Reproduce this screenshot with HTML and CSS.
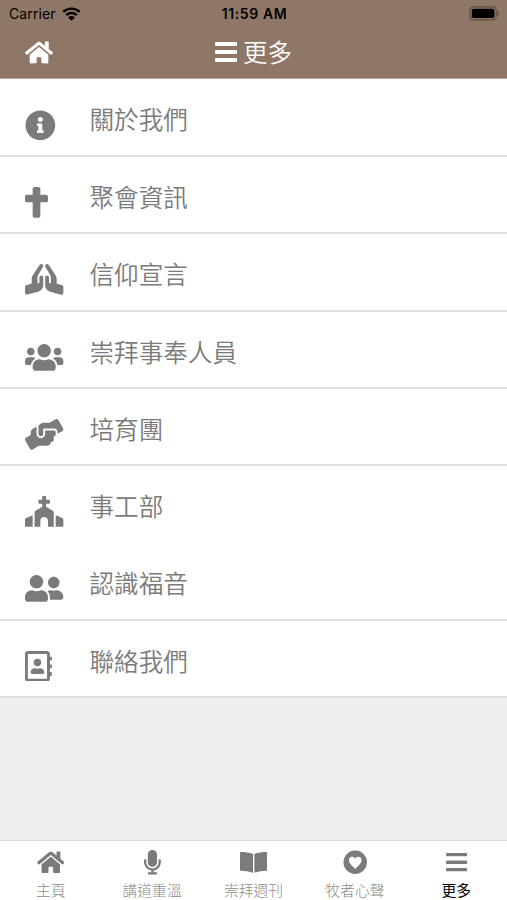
FILE: index.html
```html
<!DOCTYPE html>
<html lang="zh-Hant">
<head>
  <meta charset="UTF-8">
  <meta name="viewport" content="width=device-width, initial-scale=1.0">
  <title>更多</title>
  <link rel="stylesheet" href="styles.css">
</head>
<body>
  <header class="header">
    <div class="status-bar">
      <div class="carrier">
        <span>Carrier</span>
        <svg class="wifi" viewBox="0 0 18 13">
          <path d="M1.2 4.6a11.2 11.2 0 0 1 15.6 0M4 7.6a7.2 7.2 0 0 1 10 0" fill="none" stroke="#000" stroke-width="2.3"/>
          <path d="M9 13L5.8 9.8a4.6 4.6 0 0 1 6.4 0z"/>
        </svg>
      </div>
      <span class="time">11:59 AM</span>
      <svg class="battery" viewBox="0 0 31 15">
        <rect x=".9" y=".9" width="26.4" height="13" rx="3.8" fill="none" stroke="#5d4c42" stroke-width="1.2"/>
        <rect x="2.8" y="2.8" width="22.6" height="9.2" rx="1.8"/>
        <path d="M28.7 5v4.8c2-.9 2-3.9 0-4.8z" fill="#5d4c42"/>
      </svg>
    </div>
    <div class="nav-bar">
      <a class="home-link" href="#">
        <svg class="icon-home" viewBox="0 0 576 512"><path d="M280.37 148.26L96 300.11V464a16 16 0 0 0 16 16l112.06-.29a16 16 0 0 0 15.92-16V368a16 16 0 0 1 16-16h64a16 16 0 0 1 16 16v95.64a16 16 0 0 0 16 16.05L464 480a16 16 0 0 0 16-16V300L295.67 148.26a12.19 12.19 0 0 0-15.3 0zM571.6 251.47L488 182.56V44.05a12 12 0 0 0-12-12h-56a12 12 0 0 0-12 12v72.61L318.47 43a48 48 0 0 0-61 0L4.34 251.47a12 12 0 0 0-1.6 16.9l25.5 31A12 12 0 0 0 45.15 301l235.22-193.74a12.19 12.19 0 0 1 15.3 0L530.9 301a12 12 0 0 0 16.9-1.6l25.5-31a12 12 0 0 0-1.7-16.93z"/></svg>
      </a>
      <h1 class="title">
        <svg class="icon-bars" viewBox="0 0 22 20"><rect width="22" height="4" rx="1"/><rect y="8" width="22" height="4" rx="1"/><rect y="16" width="22" height="4" rx="1"/></svg>
        <span>更多</span>
      </h1>
    </div>
  </header>

  <main class="menu">
    <a class="menu-item" href="#">
      <svg viewBox="0 0 512 512"><path d="M256 8C119.043 8 8 119.083 8 256c0 136.997 111.043 248 248 248s248-111.003 248-248C504 119.083 392.957 8 256 8zm0 110c23.196 0 42 18.804 42 42s-18.804 42-42 42-42-18.804-42-42 18.804-42 42-42zm56 254c0 6.627-5.373 12-12 12h-88c-6.627 0-12-5.373-12-12v-24c0-6.627 5.373-12 12-12h12v-64h-12c-6.627 0-12-5.373-12-12v-24c0-6.627 5.373-12 12-12h64c6.627 0 12 5.373 12 12v100h12c6.627 0 12 5.373 12 12v24z"/></svg>
      <span>關於我們</span>
    </a>
    <a class="menu-item" href="#">
      <svg viewBox="0 0 384 512"><path d="M352 128h-96V32c0-17.67-14.33-32-32-32h-64c-17.67 0-32 14.33-32 32v96H32c-17.67 0-32 14.33-32 32v64c0 17.67 14.33 32 32 32h96v224c0 17.67 14.33 32 32 32h64c17.67 0 32-14.33 32-32V256h96c17.67 0 32-14.33 32-32v-64c0-17.67-14.33-32-32-32z"/></svg>
      <span>聚會資訊</span>
    </a>
    <a class="menu-item" href="#">
      <svg viewBox="0 0 640 512"><path d="M272 191.91c-17.6 0-32 14.4-32 32v80c0 8.84-7.16 16-16 16s-16-7.16-16-16v-76.55c0-17.39 4.72-34.47 13.69-49.39l77.75-129.59c9.09-15.16 4.19-34.81-10.97-43.91-14.45-8.67-32.72-4.3-42.3 9.21-.2.23-.62.21-.79.48l-117.26 175.9C117.56 205.9 112 224.31 112 243.29v80.23l-90.12 30.04A31.974 31.974 0 0 0 0 383.91v96c0 10.82 8.52 32 32 32 2.69 0 5.41-.34 8.06-1.03l179.19-46.62C269.16 449.99 304 403.8 304 351.91v-128c0-17.6-14.4-32-32-32zm346.12 161.73L528 323.6v-80.23c0-18.98-5.56-37.39-16.12-53.23L394.62 14.25c-.18-.27-.59-.24-.79-.48-9.58-13.51-27.85-17.88-42.3-9.21-15.16 9.09-20.06 28.75-10.97 43.91l77.75 129.59c8.97 14.92 13.69 32 13.69 49.39V304c0 8.84-7.16 16-16 16s-16-7.16-16-16v-80c0-17.6-14.4-32-32-32s-32 14.4-32 32v128c0 51.89 34.84 98.08 84.75 112.34l179.19 46.62c2.66.69 5.38 1.03 8.06 1.03 23.48 0 32-21.18 32-32v-96c0-13.77-8.81-25.99-21.88-30.35z"/></svg>
      <span>信仰宣言</span>
    </a>
    <a class="menu-item" href="#">
      <svg viewBox="0 0 640 512"><path d="M96 224c35.3 0 64-28.7 64-64s-28.7-64-64-64-64 28.7-64 64 28.7 64 64 64zm448 0c35.3 0 64-28.7 64-64s-28.7-64-64-64-64 28.7-64 64 28.7 64 64 64zm32 32h-64c-17.6 0-33.5 7.1-45.1 18.6 40.3 22.1 68.9 62 75.1 109.4h66c17.7 0 32-14.3 32-32v-32c0-35.3-28.7-64-64-64zm-256 0c61.9 0 112-50.1 112-112S381.9 32 320 32 208 82.1 208 144s50.1 112 112 112zm76.8 32h-8.3c-20.8 10-43.9 16-68.5 16s-47.6-6-68.5-16h-8.3C179.6 288 128 339.6 128 403.2V432c0 26.5 21.5 48 48 48h288c26.5 0 48-21.5 48-48v-28.8c0-63.6-51.6-115.2-115.2-115.2zm-223.7-13.4C161.5 263.1 145.6 256 128 256H64c-35.3 0-64 28.7-64 64v32c0 17.7 14.3 32 32 32h65.9c6.3-47.4 34.9-87.3 75.2-109.4z"/></svg>
      <span>崇拜事奉人員</span>
    </a>
    <a class="menu-item" href="#">
      <svg viewBox="0 0 640 512"><path d="M488 192H336v56c0 39.7-32.3 72-72 72s-72-32.3-72-72V126.4l-64.9 39C107.8 176.9 96 197.8 96 220.2v47.3l-80 46.2C.7 322.5-4.6 342.1 4.3 357.4l80 138.6c8.8 15.3 28.4 20.5 43.7 11.7L231.4 448H368c35.3 0 64-28.7 64-64h16c17.7 0 32-14.3 32-32v-64h8c13.3 0 24-10.7 24-24v-48c0-13.3-10.7-24-24-24zm147.7-37.4L555.7 16C546.9.7 527.3-4.5 512 4.3L408.6 64H306.4c-12 0-23.7 3.4-33.9 9.7L239 94.6c-9.4 5.8-15 16.1-15 27.1V248c0 22.1 17.9 40 40 40s40-17.9 40-40v-88h184c30.9 0 56 25.1 56 56v28.5l80-46.2c15.3-8.9 20.5-28.4 11.7-43.7z"/></svg>
      <span>培育團</span>
    </a>
    <a class="menu-item no-line" href="#">
      <svg viewBox="0 0 640 512"><path d="M464.46 246.68L352 179.2V128h48c8.84 0 16-7.16 16-16V80c0-8.84-7.16-16-16-16h-48V16c0-8.84-7.16-16-16-16h-32c-8.84 0-16 7.16-16 16v48h-48c-8.84 0-16 7.16-16 16v32c0 8.84 7.16 16 16 16h48v51.2l-112.46 67.48A31.997 31.997 0 0 0 160 274.12V512h96v-96c0-35.35 28.65-64 64-64s64 28.65 64 64v96h96V274.12c0-11.24-5.9-21.66-15.54-27.44zM0 395.96V496c0 8.84 7.16 16 16 16h112V320L19.39 366.54A32.024 32.024 0 0 0 0 395.96zm620.61-29.42L512 320v192h112c8.84 0 16-7.16 16-16V395.96c0-12.8-7.63-24.37-19.39-29.42z"/></svg>
      <span>事工部</span>
    </a>
    <a class="menu-item" href="#">
      <svg viewBox="0 0 640 512"><path d="M192 256c61.9 0 112-50.1 112-112S253.9 32 192 32 80 82.1 80 144s50.1 112 112 112zm76.8 32h-8.3c-20.8 10-43.9 16-68.5 16s-47.6-6-68.5-16h-8.3C51.6 288 0 339.6 0 403.2V432c0 26.5 21.5 48 48 48h288c26.5 0 48-21.5 48-48v-28.8c0-63.6-51.6-115.2-115.2-115.2zM480 256c53 0 96-43 96-96s-43-96-96-96-96 43-96 96 43 96 96 96zm48 32h-3.8c-13.9 4.8-28.6 8-44.2 8s-30.3-3.2-44.2-8H432c-20.4 0-39.2 5.9-55.7 15.4 24.4 26.3 39.7 61.2 39.7 99.8v38.4c0 2.2-.5 4.3-.6 6.4H592c26.5 0 48-21.5 48-48 0-61.9-50.1-112-112-112z"/></svg>
      <span>認識福音</span>
    </a>
    <a class="menu-item" href="#">
      <svg viewBox="0 0 448 512"><path d="M436 160c6.6 0 12-5.4 12-12v-40c0-6.6-5.4-12-12-12h-20V48c0-26.5-21.5-48-48-48H48C21.5 0 0 21.5 0 48v416c0 26.5 21.5 48 48 48h320c26.5 0 48-21.5 48-48v-48h20c6.6 0 12-5.4 12-12v-40c0-6.6-5.4-12-12-12h-20v-64h20c6.6 0 12-5.4 12-12v-40c0-6.6-5.4-12-12-12h-20v-64h20zm-68 304H48V48h320v416zM208 256c35.3 0 64-28.7 64-64s-28.7-64-64-64-64 28.7-64 64 28.7 64 64 64zm-89.6 128h179.2c12.4 0 22.4-8.6 22.4-19.2v-19.2c0-31.8-30.1-57.6-67.2-57.6-10.8 0-18.7 8-44.8 8-26.9 0-33.4-8-44.8-8-37.1 0-67.2 25.8-67.2 57.6v19.2c0 10.6 10 19.2 22.4 19.2z"/></svg>
      <span>聯絡我們</span>
    </a>
  </main>

  <nav class="tab-bar">
    <a class="tab" href="#">
      <svg viewBox="0 0 576 512"><path d="M280.37 148.26L96 300.11V464a16 16 0 0 0 16 16l112.06-.29a16 16 0 0 0 15.92-16V368a16 16 0 0 1 16-16h64a16 16 0 0 1 16 16v95.64a16 16 0 0 0 16 16.05L464 480a16 16 0 0 0 16-16V300L295.67 148.26a12.19 12.19 0 0 0-15.3 0zM571.6 251.47L488 182.56V44.05a12 12 0 0 0-12-12h-56a12 12 0 0 0-12 12v72.61L318.47 43a48 48 0 0 0-61 0L4.34 251.47a12 12 0 0 0-1.6 16.9l25.5 31A12 12 0 0 0 45.15 301l235.22-193.74a12.19 12.19 0 0 1 15.3 0L530.9 301a12 12 0 0 0 16.9-1.6l25.5-31a12 12 0 0 0-1.7-16.93z"/></svg>
      <span>主頁</span>
    </a>
    <a class="tab" href="#">
      <svg viewBox="0 0 352 512"><path d="M176 352c53.02 0 96-42.98 96-96V96c0-53.02-42.98-96-96-96S80 42.98 80 96v160c0 53.02 42.98 96 96 96zm160-160h-16c-8.84 0-16 7.16-16 16v48c0 74.8-64.49 134.82-140.79 127.38C96.71 376.89 48 317.11 48 250.3V208c0-8.84-7.16-16-16-16H16c-8.84 0-16 7.16-16 16v40.16c0 89.64 63.97 169.55 152 181.69V464H96c-8.84 0-16 7.16-16 16v16c0 8.84 7.16 16 16 16h160c8.84 0 16-7.16 16-16v-16c0-8.84-7.16-16-16-16h-56v-33.77C285.71 418.47 352 344.9 352 256v-48c0-8.84-7.16-16-16-16z"/></svg>
      <span>講道重溫</span>
    </a>
    <a class="tab" href="#">
      <svg viewBox="0 0 28 25"><path d="M.9 2C5 2 9.5 2.5 13.3 4v19.2C9.5 21.8 5 21.2.9 21.1Q0 21.1 0 20.2V2.9Q0 2 .9 2zM27.1 2C23 2 18.5 2.5 14.7 4v19.2c3.8-1.4 8.300-2 12.4-2.1q.9 0 .9-.9V2.9q0-.9-.9-.9z"/></svg>
      <span>崇拜週刊</span>
    </a>
    <a class="tab" href="#">
      <svg viewBox="0 0 25 25"><circle cx="12.5" cy="12.5" r="12"/><path class="heart" d="M12.5 19.300C9.500 16.300 6 13.400 6 10.200c0-4 4.700-4.500 6.500-1.500 1.800-3 6.500-2.500 6.500 1.500 0 3.200-3.500 6.100-6.500 9.100z"/></svg>
      <span>牧者心聲</span>
    </a>
    <a class="tab active" href="#">
      <svg viewBox="0 0 22 25"><rect y="3" width="22" height="3.5" rx="1"/><rect y="10.7" width="22" height="3.5" rx="1"/><rect y="18.3" width="22" height="3.5" rx="1"/></svg>
      <span>更多</span>
    </a>
  </nav>
</body>
</html>
```
FILE: styles.css
```css
* {
  margin: 0;
  padding: 0;
  box-sizing: border-box;
}

body {
  display: flex;
  flex-direction: column;
  height: 100vh;
  background-color: #eee;
  font-family: "Noto Sans CJK TC", sans-serif;
}

a {
  color: inherit;
  text-decoration: none;
}

svg {
  display: block;
  fill: currentColor;
}

/* Header */
.header {
  height: 79px;
  background-color: #8f7767;
  border-bottom: 1px solid #b5a79d;
}

.status-bar {
  display: grid;
  grid-template-columns: 1fr auto 1fr;
  align-items: center;
  height: 27px;
  padding: 0 7px 0 9px;
  color: #000;
  font-family: Inter, sans-serif;
  font-size: 14px;
}

.carrier {
  display: flex;
  align-items: center;
  gap: 6px;
  letter-spacing: 0.1px;
}

.wifi {
  width: 19px;
  height: 14px;
}

.time {
  font-weight: 600;
  letter-spacing: 0.6px;
}

.battery {
  width: 31px;
  height: 15px;
  justify-self: end;
}

.nav-bar {
  display: grid;
  grid-template-columns: 1fr auto 1fr;
  align-items: center;
  height: 50px;
  padding: 0 25px;
  color: #fff;
}

.icon-home {
  width: 28px;
  height: 25px;
}

.title {
  display: flex;
  align-items: center;
  gap: 6px;
  font-size: 24.6px;
  font-weight: 350;
  line-height: 36px;
}

.title span {
  margin-top: -2px;
}

.icon-bars {
  width: 22px;
  height: 20px;
}

/* Menu list */
.menu {
  flex: 1;
}

.menu-item {
  display: grid;
  grid-template-columns: 64.3px 1fr;
  height: 77.3px;
  padding-left: 25.2px;
  background-color: #fff;
  border-bottom: 2px solid #e0e0e0;
  color: #7b7b7b;
  font-size: 24.6px;
  font-weight: 350;
}

.menu-item.no-line {
  border-bottom-color: #fff;
}

.menu-item:first-child {
  height: 78px;
}

.menu-item svg {
  height: 30.7px;
  margin-top: 30px;
}

.menu-item:first-child svg {
  margin-top: 30.7px;
}

.menu-item span {
  padding-top: 21px;
  line-height: 36px;
}

/* Bottom tabs */
.tab-bar {
  display: grid;
  grid-template-columns: repeat(5, 1fr);
  height: 60px;
  background-color: #fff;
  border-top: 1px solid #dcdcdc;
  color: #7b7b7b;
}

.tab {
  display: flex;
  flex-direction: column;
  align-items: center;
  padding-top: 9px;
  font-size: 14.8px;
  font-weight: 300;
}

.tab svg {
  height: 24.5px;
}

.tab span {
  margin-top: 5.5px;
  line-height: 20px;
  color: #8c8c8c;
}

.tab.active span {
  color: #000;
  font-weight: 400;
}

.heart {
  fill: #fff;
}
```
